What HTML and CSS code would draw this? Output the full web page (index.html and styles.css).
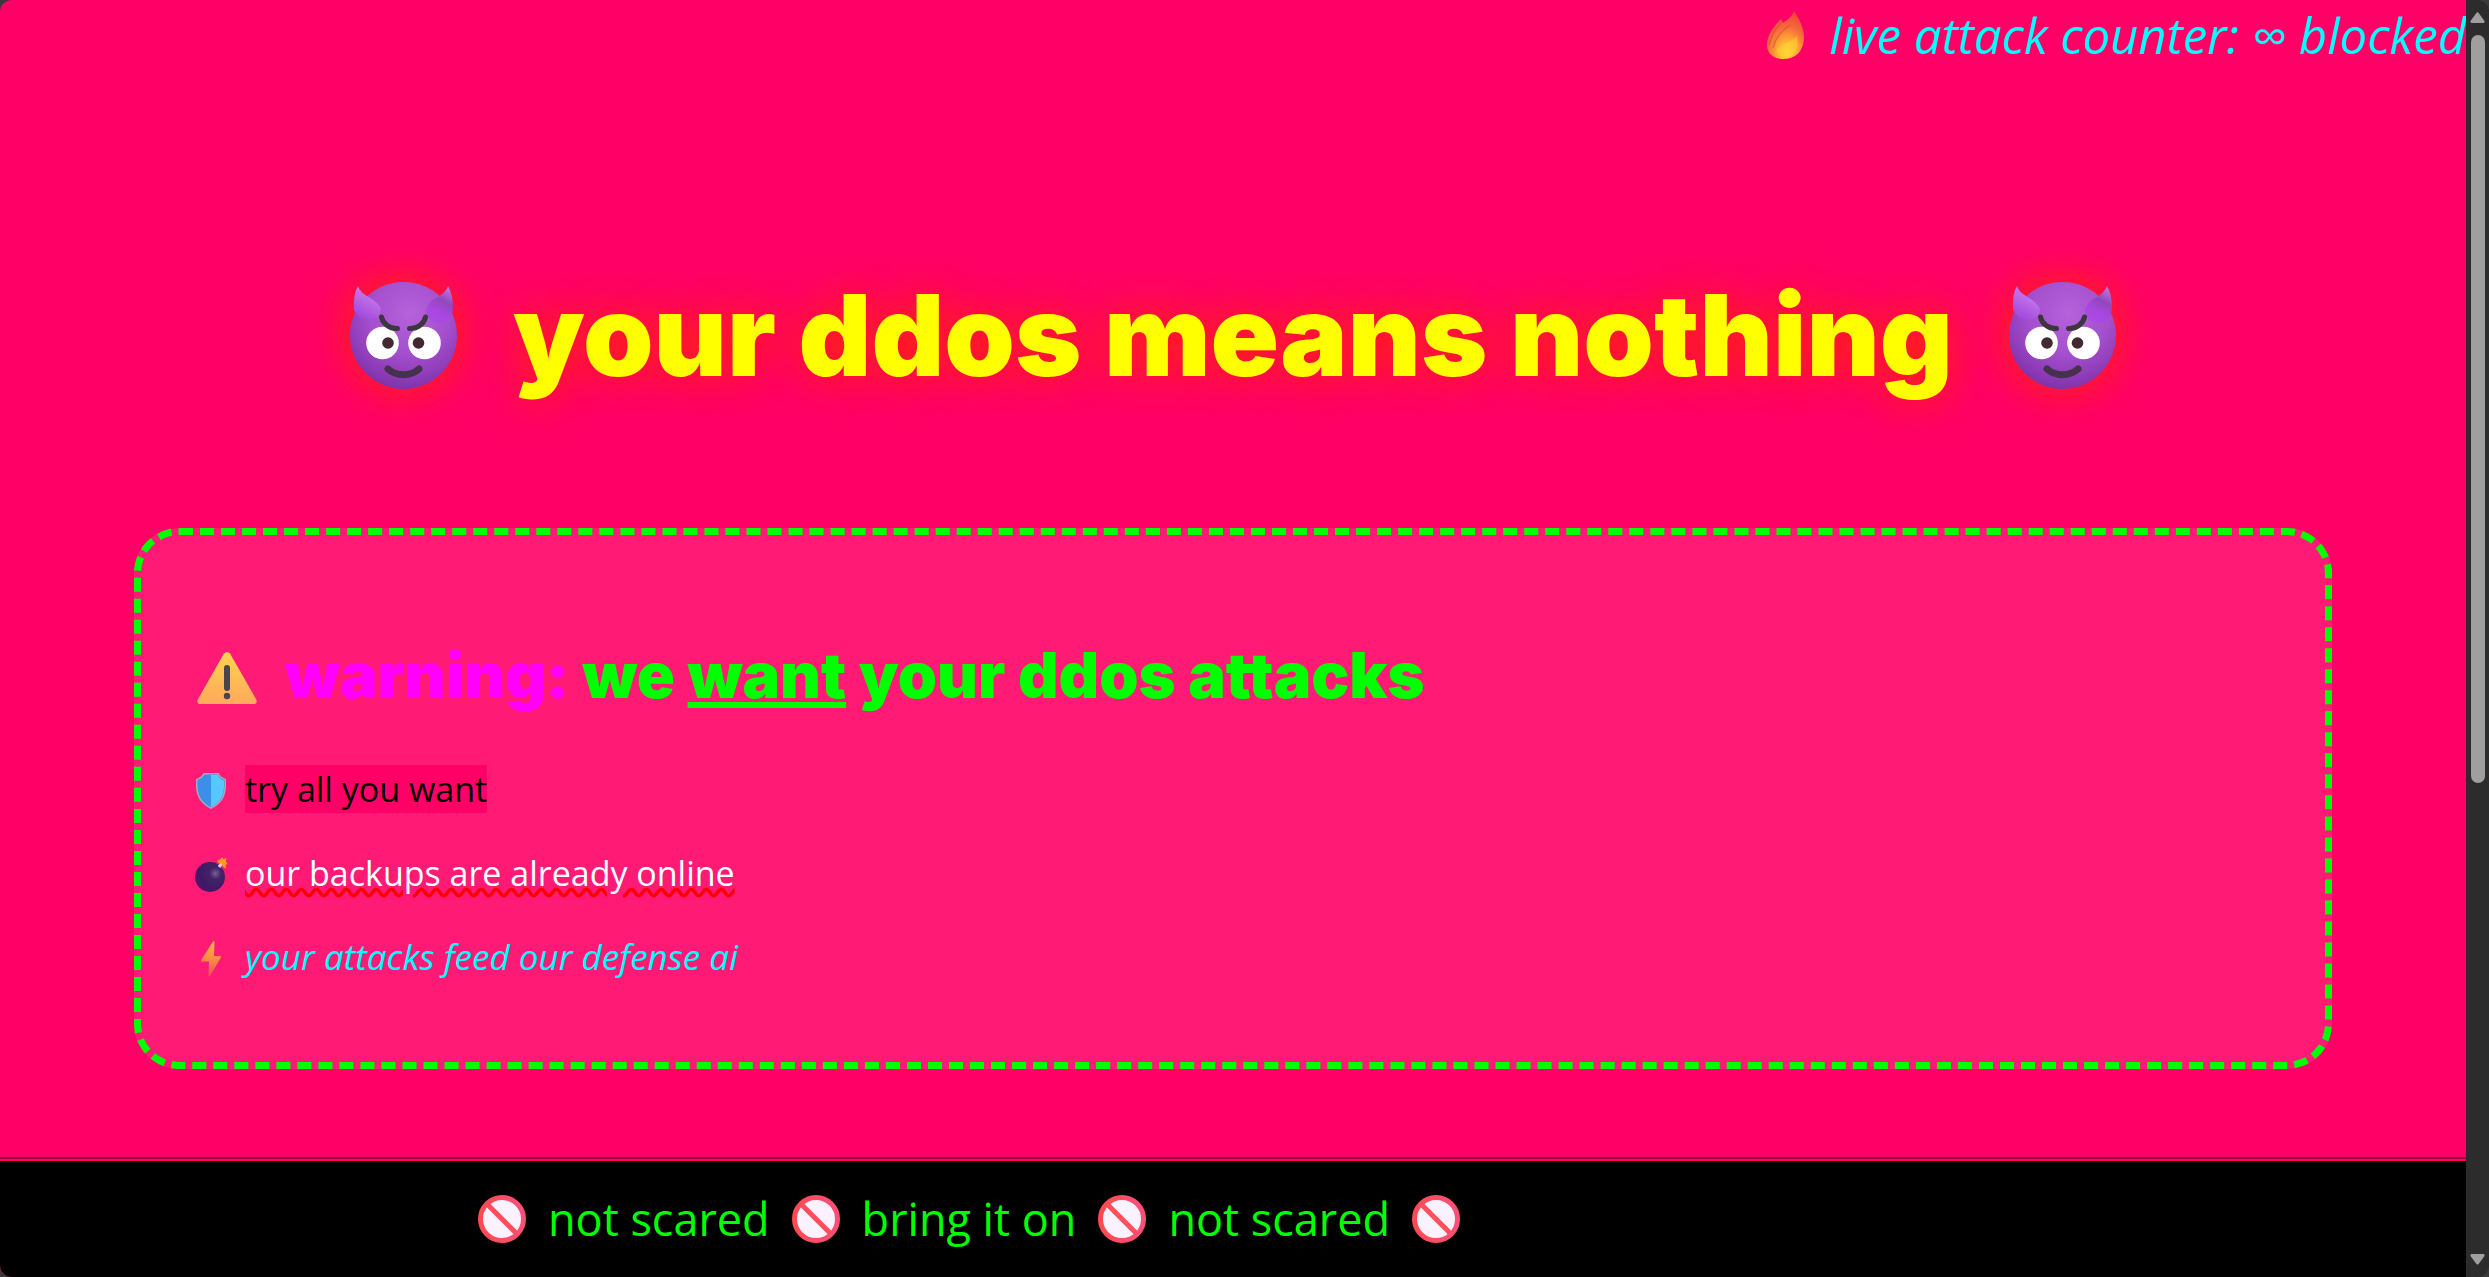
FILE: index.html
```html
<!DOCTYPE html>
<html lang="en">
<head>
<meta charset="utf-8">
<title>your ddos means nothing</title>
<meta name="viewport" content="width=device-width, initial-scale=1">
<link rel="stylesheet" href="styles.css">
</head>
<body>
<svg class="defs" aria-hidden="true">
  <defs>
    <radialGradient id="face" cx=".56" cy=".3" r=".75">
      <stop offset="0" stop-color="#b562dc"/><stop offset=".5" stop-color="#a44fcd"/><stop offset=".8" stop-color="#8d3bb8"/><stop offset="1" stop-color="#7a30a4"/>
    </radialGradient>
    <linearGradient id="horn-left" x1=".7" y1=".1" x2=".3" y2="1">
      <stop offset="0" stop-color="#cd7df0"/><stop offset=".4" stop-color="#b96ae6"/><stop offset="1" stop-color="#a044dc"/>
    </linearGradient>
    <linearGradient id="horn-right" x1=".8" y1="0" x2=".4" y2="1">
      <stop offset="0" stop-color="#c478e6"/><stop offset=".4" stop-color="#9148ba"/><stop offset=".7" stop-color="#a846e0"/><stop offset="1" stop-color="#ac4ae4"/>
    </linearGradient>
    <radialGradient id="flame" cx=".55" cy=".88" r=".85">
      <stop offset="0" stop-color="#ffd836"/><stop offset=".35" stop-color="#ffa832"/><stop offset=".65" stop-color="#f7693a"/><stop offset="1" stop-color="#f0453c"/>
    </radialGradient>
    <linearGradient id="sign" x1="0" y1="0" x2="0" y2="1">
      <stop offset="0" stop-color="#ffd34f"/><stop offset="1" stop-color="#ffa95c"/>
    </linearGradient>
    <radialGradient id="ball" cx=".68" cy=".38" r=".7">
      <stop offset="0" stop-color="#766292"/><stop offset=".28" stop-color="#432368"/><stop offset=".7" stop-color="#3d1b62"/><stop offset="1" stop-color="#4f126e"/>
    </radialGradient>
    <linearGradient id="spark" x1="0" y1="0" x2="0" y2="1">
      <stop offset="0" stop-color="#ffb53e"/><stop offset=".5" stop-color="#fb8a45"/><stop offset="1" stop-color="#f04a5a"/>
    </linearGradient>
    <linearGradient id="ring" x1="0" y1="0" x2="1" y2="0">
      <stop offset="0" stop-color="#ff4a52"/><stop offset="1" stop-color="#fb4f7a"/>
    </linearGradient>
    <symbol id="devil" viewBox="0 0 107 107">
      <circle cx="53.500" cy="53.500" r="53.500" fill="url(#face)"/>
      <path d="M8 4Q10 10 17 14Q28 20 31 27Q31 36 20 38Q8 38 4 28Q3 12 8 4Z" fill="url(#horn-left)"/>
      <path d="M98 4Q96 10 88 15Q77 20 76 29Q78 41 91 41Q102 40 103 26Q103 12 98 4Z" fill="url(#horn-right)"/>
      <circle cx="32.500" cy="61" r="16.300" fill="#fff"/><circle cx="74.500" cy="61" r="16.300" fill="#fff"/>
      <circle cx="38" cy="61" r="5.800" fill="#442831"/><circle cx="68.500" cy="61" r="5.800" fill="#442831"/>
      <path d="M31.500 35c1 6 8 12 16 11.500M75.500 35c-1 6-8 12-16 11.500" fill="none" stroke="#3d3540" stroke-width="5" stroke-linecap="round"/>
      <path d="M38 87c8 7.500 23 7.500 31 0" fill="none" stroke="#46324d" stroke-width="7" stroke-linecap="round"/>
    </symbol>
    <symbol id="fire" viewBox="0 0 37 48">
      <path d="M27 0C32 8 37 17 37 26C37 40 29 48 16 48C6 48 0 42 0 34C0 24 7 15 14 8L16 12C20 9 25 6 27 0Z" fill="url(#flame)"/>
      <path d="M2 34C5 23 9 16 15 11M6 37C8 28 14 20 23 14" fill="none" stroke="#c9433a" stroke-opacity=".45" stroke-width="1.500"/>
      <path d="M30 25c1 8 1 16-6 20c-6 3-12 1-14-4c-1-5 8-9 13-11c3-1 5-3 7-5z" fill="#ffd535" fill-opacity=".5"/>
    </symbol>
    <symbol id="warn" viewBox="0 0 60 52">
      <path d="M27 1.500Q30-1.500 33 1.500L59.500 48Q60.500 52 57 52H3Q-.5 52 .5 48z" fill="url(#sign)"/>
      <path d="M30 16v20" stroke="#4b4350" stroke-width="6" stroke-linecap="round"/><circle cx="30" cy="44" r="3.200" fill="#4b4350"/>
    </symbol>
    <symbol id="shield" viewBox="0 0 30 36">
      <path d="M8 .7h14l2.500 3.500l4.800 2.500c.7 12-1 22-14.300 28.500C1.700 28.700 0 18.700.7 6.700l4.800-2.500z" fill="#3b8eea" stroke="#a9a8bd" stroke-width="1.500"/>
      <path d="M15 2h6.500l2 3l4.500 2.400c.6 11-1 20.600-13 26.600z" fill="#55c8ff"/>
    </symbol>
    <symbol id="bomb" viewBox="0 0 32 36">
      <circle cx="15" cy="20" r="15" fill="url(#ball)"/>
      <path d="M24 10l3-4" stroke="#dcc8d8" stroke-width="3"/>
      <path d="M27 0l1.500 2L31.500 1L31 4.500L32.500 7L30.500 8l.5 3.500L28 10l-1-3.500L23 6L22.500 3l2.500-.5z" fill="#ff981f"/>
    </symbol>
    <symbol id="bolt" viewBox="0 0 20 36">
      <path d="M12 .5q1.500-.8 1.500 1l-.5 13.500h6q1.500 0 .8 1.800L9 35q-1.500 1.500-1.500-.5l.5-14H1q-1.300 0-.7-1.800z" fill="url(#spark)"/>
    </symbol>
    <symbol id="no" viewBox="0 0 48 48">
      <circle cx="24" cy="24" r="21.500" fill="#faf3ff" stroke="url(#ring)" stroke-width="5"/>
      <path d="M10 10l28 28" stroke="#ff4d5a" stroke-width="5"/>
    </symbol>
  </defs>
</svg>

<div class="window">
  <main class="page">
    <div class="counter">
      <svg class="icon-fire" aria-hidden="true"><use href="#fire"/></svg>
      <em>live attack counter: ∞ blocked</em>
    </div>

    <h1 class="title">
      <svg class="icon-devil" aria-hidden="true"><use href="#devil"/></svg>
      <span>your ddos means nothing</span>
      <svg class="icon-devil" aria-hidden="true"><use href="#devil"/></svg>
    </h1>

    <section class="card">
      <h2 class="warning">
        <svg class="icon-warn" aria-hidden="true"><use href="#warn"/></svg>
        <span><span class="label">warning:</span> we <u>want</u> your ddos attacks</span>
      </h2>
      <p class="line"><span class="slot"><svg class="icon-shield" aria-hidden="true"><use href="#shield"/></svg></span><span class="hidden-text">try all you want</span></p>
      <p class="line"><span class="slot"><svg class="icon-bomb" aria-hidden="true"><use href="#bomb"/></svg></span><span class="wavy">our backups are already online</span></p>
      <p class="line"><span class="slot"><svg class="icon-bolt" aria-hidden="true"><use href="#bolt"/></svg></span><em>your attacks feed our defense ai</em></p>
    </section>

    <hr class="rule">

    <footer class="ticker">
      <svg class="icon-no" aria-hidden="true"><use href="#no"/></svg>
      <span>not scared</span>
      <svg class="icon-no" aria-hidden="true"><use href="#no"/></svg>
      <span>bring it on</span>
      <svg class="icon-no" aria-hidden="true"><use href="#no"/></svg>
      <span>not scared</span>
      <svg class="icon-no" aria-hidden="true"><use href="#no"/></svg>
    </footer>
  </main>
  <div class="scrollbar" aria-hidden="true">
    <svg class="arrow" viewBox="0 0 15 11"><path d="M6 1.500Q7.500-.8 9 1.500L14.500 9Q15 11 13 11H2Q0 11 .5 9z"/></svg>
    <div class="track"><div class="thumb"></div></div>
    <svg class="arrow" viewBox="0 0 15 11"><path d="M6 9.500Q7.500 11.800 9 9.500L14.500 2Q15 0 13 0H2Q0 0 .5 2z"/></svg>
  </div>
</div>
</body>
</html>
```
FILE: styles.css
```css
* { box-sizing: border-box; }

body {
  margin: 0;
  background: #3a3a3a;
  font-family: "Open Sans", "Noto Sans", sans-serif;
  color: #fff;
}

svg { display: block; flex: none; }
.defs { position: absolute; width: 0; height: 0; }

.window {
  display: grid;
  grid-template-columns: 1fr 23px;
  height: 100vh;
  border-radius: 12px;
  overflow: hidden;
}

.page {
  display: flex;
  flex-direction: column;
  background: #ff0066;
  min-width: 0;
  overflow: hidden;
}

.counter {
  display: flex;
  justify-content: flex-end;
  align-items: center;
  gap: 25px;
  height: 70px;
  font-size: 49px;
  line-height: 70px;
  color: #0ff;
  white-space: nowrap;
}

.title {
  display: flex;
  justify-content: center;
  align-items: center;
  gap: 56px;
  margin: 190px 0 118px;
  font-family: Inter, sans-serif;
  font-size: 113px;
  font-weight: 900;
  line-height: 150px;
  color: #ff0;
  text-shadow: 0 0 45px #ff2a00;
  white-space: nowrap;
}

.card {
  margin: 0 134px;
  padding: 45px;
  border: 7px dashed #0f0;
  border-radius: 45px;
  background: #ff1a75;
  font-size: 34px;
  line-height: 48px;
}

.warning {
  display: flex;
  align-items: center;
  gap: 28px;
  margin: 53px 0 48px;
  padding-left: 11px;
  font-family: Inter, sans-serif;
  font-size: 63px;
  font-weight: 900;
  line-height: 84px;
  color: #0f0;
}

.label { color: #f0f; }

.line {
  display: flex;
  margin: 36px 0;
}

.slot {
  display: grid;
  place-items: center;
  width: 50px;
  margin-right: 9px;
  padding-top: 4px;
}

.hidden-text { background: #ff0066; color: #000; }

.wavy { text-decoration: underline wavy #f00; }

.line em { color: #0ff; font-size: 35px; }

.rule {
  width: 100%;
  height: 4px;
  margin: 88px 0 0;
  border: 0;
  border-top: 2px solid #a30042;
}

.ticker {
  display: flex;
  align-items: center;
  gap: 22px;
  flex: 1;
  padding-left: 478px;
  background: #000;
  font-size: 45px;
  line-height: 66px;
  color: #0f0;
  white-space: nowrap;
}

.icon-devil { width: 107px; height: 107px; filter: drop-shadow(0 0 22px #ff2a00); }
.icon-fire { width: 37px; height: 48px; }
.icon-warn { width: 60px; height: 52px; margin-top: 6px; }
.icon-shield { width: 30px; height: 36px; }
.icon-bomb { width: 32px; height: 36px; }
.icon-bolt { width: 20px; height: 36px; }
.icon-no { width: 48px; height: 48px; }

.scrollbar {
  display: flex;
  flex-direction: column;
  align-items: center;
  gap: 12px;
  padding: 12px 0;
  background: #2c2c2c;
}

.arrow { width: 15px; height: 11px; fill: #9f9f9f; }

.track { flex: 1; }

.thumb {
  width: 14px;
  height: 62%;
  border-radius: 7px;
  background: #9f9f9f;
}
```
